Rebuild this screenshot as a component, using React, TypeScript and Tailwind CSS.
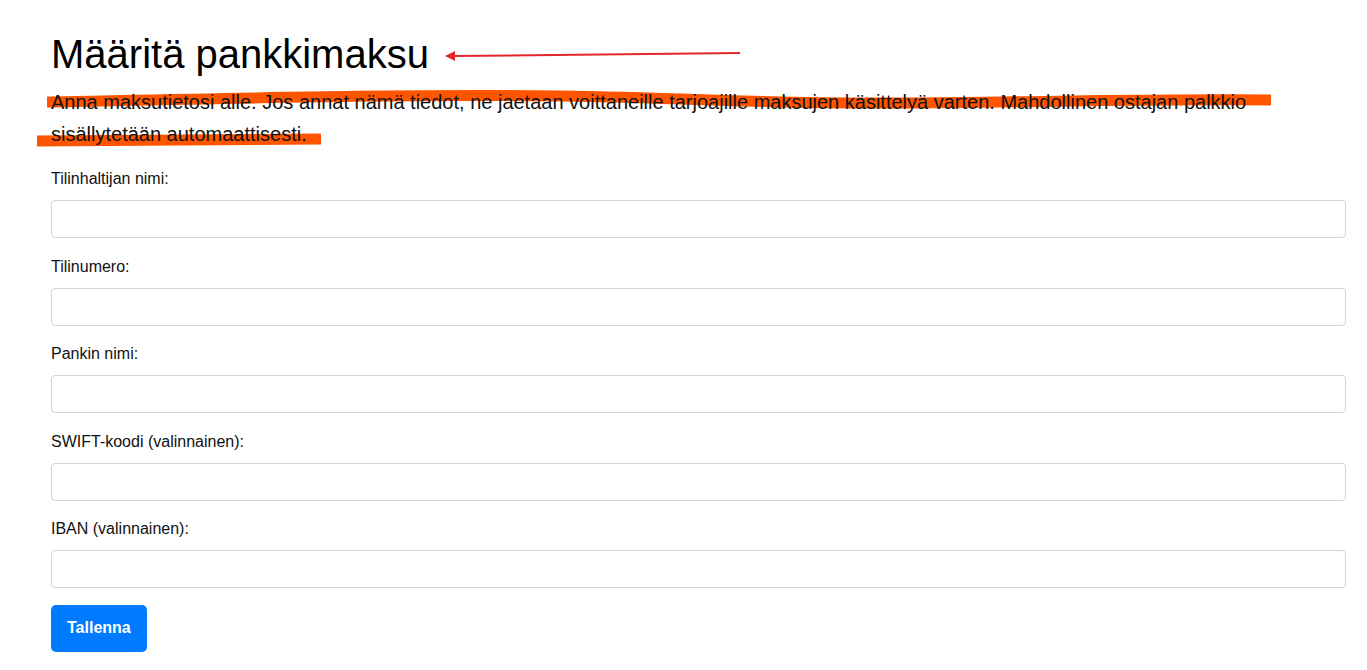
import React from "react";

const fields = [
  "Tilinhaltijan nimi:",
  "Tilinumero:",
  "Pankin nimi:",
  "SWIFT-koodi (valinnainen):",
  "IBAN (valinnainen):",
];

const Annotations = () => (
  <svg
    className="pointer-events-none absolute left-0 top-0 z-0"
    width="1367"
    height="670"
    viewBox="0 0 1367 670"
  >
    {/* highlighter strokes */}
    <path
      d="M47 102 C 250 98, 420 94, 560 96 S 760 104, 900 103 S 1150 99, 1271 100"
      stroke="#ff5500"
      strokeWidth="11"
      fill="none"
    />
    <path
      d="M37 141 C 120 140, 220 139, 321 139"
      stroke="#ff5500"
      strokeWidth="11"
      fill="none"
    />
    {/* red arrow */}
    <line x1="740" y1="53" x2="455" y2="56" stroke="#e3262c" strokeWidth="2" />
    <polygon points="445,56 455,51 455,61" fill="#e3262c" />
  </svg>
);

export default function App() {
  return (
    <div className="relative min-h-[670px] bg-white text-black font-['Liberation_Sans',Arial,sans-serif]">
      <Annotations />
      <div className="relative z-10 pl-[51px] pr-[21px] pt-[30px]">
        <h1 className="text-[40px] leading-[48px] font-normal mb-2">Määritä pankkimaksu</h1>
        <p className="text-[20px] leading-[32px] mb-[17px] text-[#111]">
          Anna maksutietosi alle. Jos annat nämä tiedot, ne jaetaan voittaneille tarjoajille maksujen
          käsittelyä varten. Mahdollinen ostajan palkkio sisällytetään automaattisesti.
        </p>
        <form className="flex flex-col" onSubmit={(e) => e.preventDefault()}>
          {fields.map((f) => (
            <div key={f} className="flex flex-col mb-[16.5px]">
              <label className="text-[16px] leading-[24px] mb-[9px] text-[#111]">{f}</label>
              <input
                type="text"
                className="h-[38px] w-full rounded-[4px] border border-[#ced4da] bg-white px-3 outline-none"
              />
            </div>
          ))}
          <div>
            <button
              type="submit"
              className="h-[47px] px-[16px] rounded-[5px] bg-[#007bff] text-white text-[16px] font-bold"
            >
              Tallenna
            </button>
          </div>
        </form>
      </div>
    </div>
  );
}
